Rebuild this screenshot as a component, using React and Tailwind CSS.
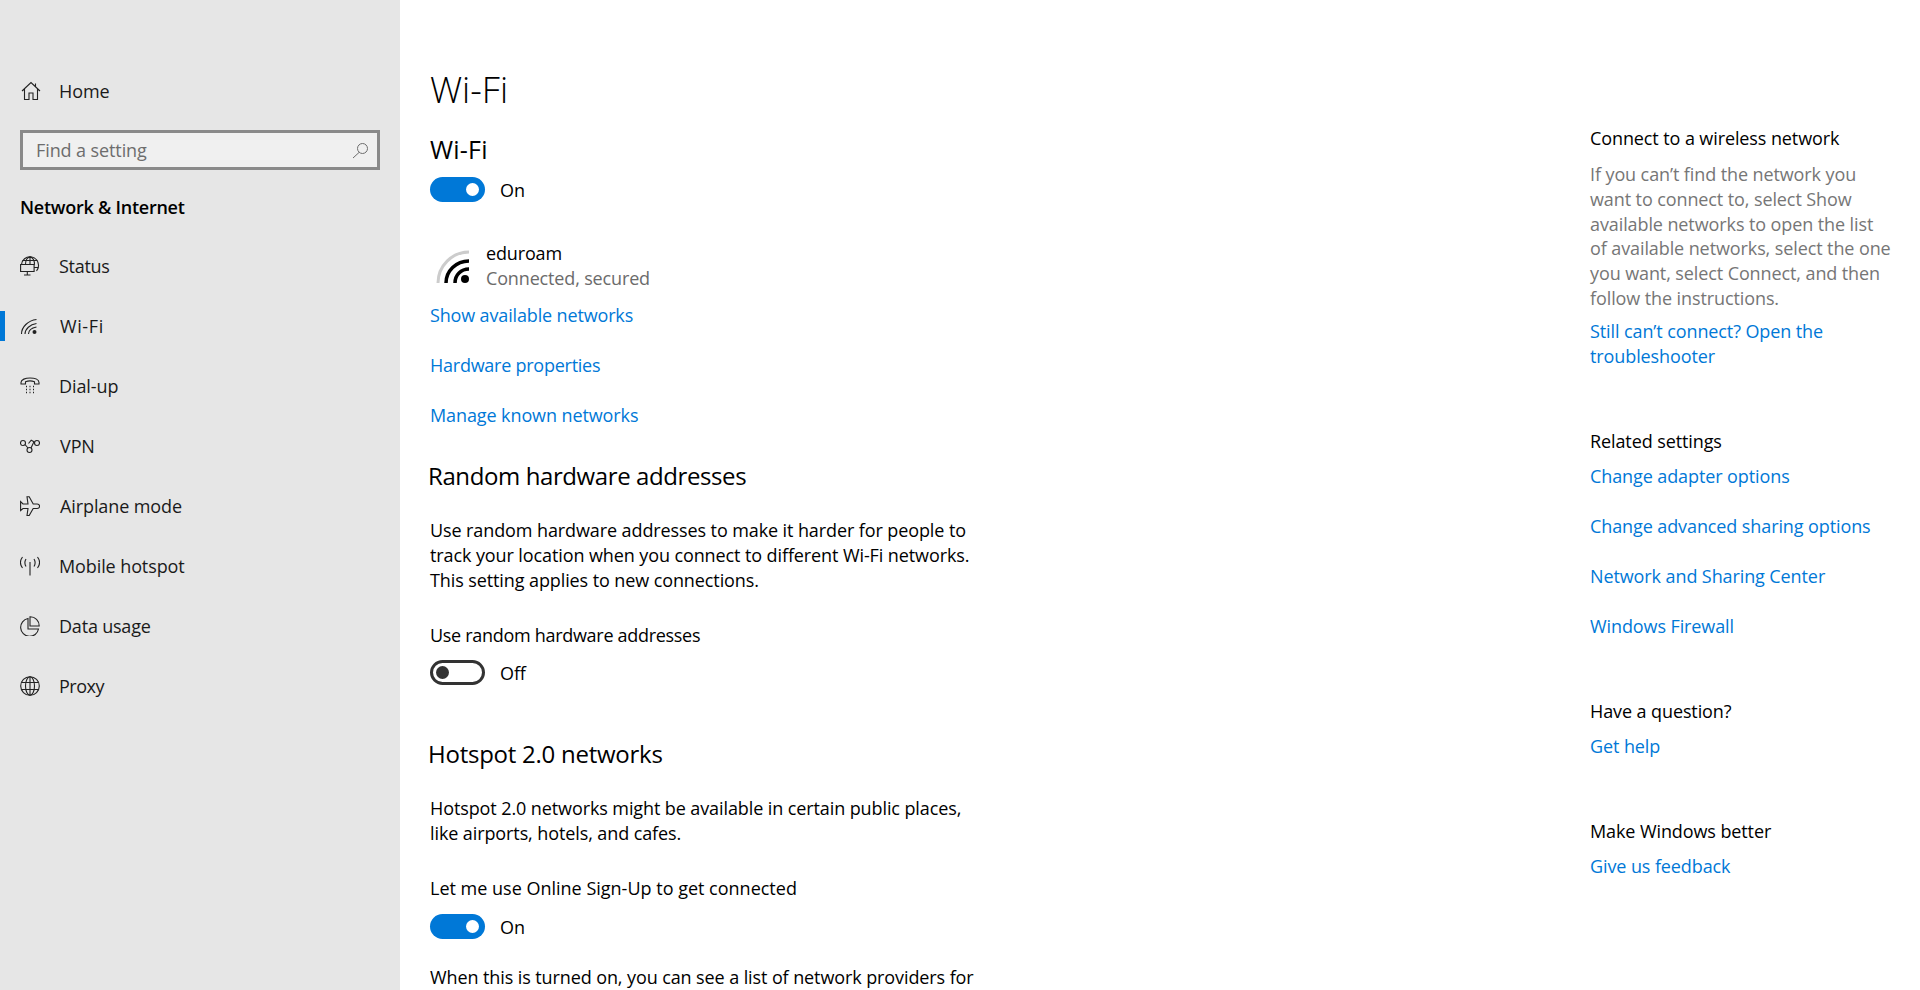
import React from "react";

const font = { fontFamily: '"Open Sans", "Noto Sans", sans-serif' };

function Icon({ children }) {
  return (
    <svg width="20" height="20" viewBox="0 0 20 20" fill="none" stroke="#222222" strokeWidth="1.1" className="shrink-0">
      {children}
    </svg>
  );
}

const HomeIcon = () => (
  <Icon>
    <path d="M1 10 10 1.500 19 10M3.500 8v10.500h4.500v-6.500h4v6.500h4.500V8M14.500 2.500v3" />
  </Icon>
);
const StatusIcon = () => (
  <Icon>
    <path d="M1.500 8.500a8.500 8.500 0 1 1 17 1.500 8 8 0 0 1-2 5" />
    <path d="M5.500 8.500C5.500 4.500 7.500 1.500 10 .8c2.500.7 4.500 4 4.500 8M10 1v7.500M2.500 4.500h15M14 11.500h4.500" />
    <path d="M.6 8.500h13.500v7H.6zM7.300 15.500v3.500M4 19h6.500" />
  </Icon>
);
const WifiIcon = () => (
  <Icon>
    <path d="M1.500 18C1.500 11 8 4.500 16.500 3.500" />
    <path d="M5 18c0-5 5-9.500 11.500-10.500" />
    <path d="M8.500 18c0-3.500 3-6 8-7" />
    <circle cx="14.500" cy="16" r="2" fill="#222222" stroke="none" />
  </Icon>
);
const DialIcon = () => (
  <Icon>
    <path d="M1 6.500C1 .5 19 .5 19 6.500v1.500h-4.500V5.800c-2.500-1-6.500-1-9 0V8H1z" />
    <path d="M6 10.500h1M9.500 10.500h1M13 10.500h1M6 13.500h1M9.500 13.500h1M13 13.500h1M6 16.500h1M9.500 16.500h1M13 16.500h1" strokeWidth="1.300" />
  </Icon>
);
const VpnIcon = () => (
  <Icon>
    <circle cx="3" cy="7" r="2.500" />
    <circle cx="17" cy="7" r="2.500" />
    <circle cx="9.500" cy="14" r="2.500" />
    <path d="M5 8.500l3 3.500M11 12 14.200 5.200M14.500 6 11.200 4.200 8.500 7.500" />
  </Icon>
);
const PlaneIcon = () => (
  <Icon>
    <path d="M.6 5.500v9l2.400-2h5L7 19.500h2.200l4-7h4c3.200 0 3.200-4.500 0-4.500h-4l-4-7.200H7l1 7.200H3z" />
  </Icon>
);
const HotspotIcon = () => (
  <Icon>
    <path d="M10 6v13.500M2.500 1C-.5 5-.5 8 2.500 12M6 3c-1.500 2.500-1.500 5 0 7.500M17.500 1c3 4 3 7 0 11M14 3c1.500 2.500 1.500 5 0 7.500" />
  </Icon>
);
const DataIcon = () => (
  <Icon>
    <path d="M8 2.500a9 9 0 1 0 10.500 10.500H8z" />
    <path d="M10 .8a9 9 0 0 1 9.200 9.200H10z" />
  </Icon>
);
const GlobeIcon = () => (
  <Icon>
    <circle cx="10" cy="10" r="9.300" />
    <ellipse cx="10" cy="10" rx="4.500" ry="9.300" />
    <path d="M10 .8v18.400M1.500 6.500h17M1.500 13.500h17" />
  </Icon>
);

const navItems = [
  { label: "Status", icon: StatusIcon, text: "tracking-[-0.3px]" },
  { label: "Wi-Fi", icon: WifiIcon, active: true, gap: "gap-[20px]", text: "tracking-[0.6px]" },
  { label: "Dial-up", icon: DialIcon },
  { label: "VPN", icon: VpnIcon, gap: "gap-[20px]" },
  { label: "Airplane mode", icon: PlaneIcon, gap: "gap-[20px]" },
  { label: "Mobile hotspot", icon: HotspotIcon },
  { label: "Data usage", icon: DataIcon, text: "tracking-[-0.2px]" },
  { label: "Proxy", icon: GlobeIcon, text: "tracking-[-0.5px]" },
];

function NavRow({ item }) {
  const Ico = item.icon;
  return (
    <div className={"relative flex h-[60px] items-center pl-5 text-[#1a1a1a] " + (item.gap || "gap-[19px]")}>
      {item.active && <div className="absolute left-0 top-[15px] h-[30px] w-[5px] bg-[#0078d7]" />}
      <Ico />
      <span className={item.text}>{item.label}</span>
    </div>
  );
}

function Toggle({ on }) {
  return (
    <div className="flex h-[25px] items-center gap-[15px]">
      {on ? (
        <div className="flex h-[25px] w-[55px] items-center justify-end rounded-full bg-[#0078d7] pr-[6px]">
          <div className="h-[13px] w-[13px] rounded-full bg-white" />
        </div>
      ) : (
        <div className="flex h-[25px] w-[55px] items-center rounded-full border-[3px] border-[#333333] pl-[3px]">
          <div className="h-[13px] w-[13px] rounded-full bg-[#333333]" />
        </div>
      )}
      <span className="pt-[2px]">{on ? "On" : "Off"}</span>
    </div>
  );
}

function A({ children, className = "" }) {
  return <div className={"text-[#0078d7] " + className}>{children}</div>;
}

function Sidebar() {
  return (
    <aside className="w-[400px] shrink-0 bg-[#e6e6e6] pt-[61px]">
      <div className="flex h-[60px] items-center gap-[18px] pl-[21px] text-[#1a1a1a]">
        <HomeIcon />
        <span>Home</span>
      </div>
      <div className="mx-5 mt-[9px] flex h-10 items-center justify-between border-[3px] border-[#8a8a8a] bg-[#f0f0f0] pl-[13px] pr-2 text-[#6d6d6d]">
        <span>Find a setting</span>
        <svg width="17" height="17" viewBox="0 0 17 17" fill="none" stroke="#6d6d6d" strokeWidth="1">
          <circle cx="10.500" cy="6.500" r="5" />
          <path d="M7 10.500 1 16" />
        </svg>
      </div>
      <div className="mt-[25px] pl-5 font-semibold tracking-[-0.25px] text-black">Network &amp; Internet</div>
      <div className="mt-[16px]">
        {navItems.map((item) => (
          <NavRow key={item.label} item={item} />
        ))}
      </div>
    </aside>
  );
}

function Main() {
  return (
    <main className="flex-1 pl-[30px] pt-[68px] text-black">
      <h1 className="text-[36px] leading-[44px] font-light tracking-normal">Wi-Fi</h1>
      <h2 className="mt-[21px] text-[25px] leading-[32px] font-normal tracking-[0.2px]">Wi-Fi</h2>
      <div className="mt-[12px]">
        <Toggle on />
      </div>
      <div className="mt-[39px] flex items-start">
        <svg width="56" height="50" viewBox="0 0 56 50" fill="none" className="shrink-0" strokeWidth="3">
          <path d="M8 42c0-17 14-31 31-31" stroke="#cccccc" />
          <path d="M16 42c0-12 10-22 23-22" stroke="#000000" strokeWidth="3.500" />
          <path d="M25 42c0-8 6-14 14-14" stroke="#000000" strokeWidth="3.500" />
          <circle cx="35" cy="38" r="4" fill="#000000" />
        </svg>
        <div className="tracking-[-0.15px]">
          <div className="leading-[25px]">eduroam</div>
          <div className="leading-[25px] text-[#6b6b6b]">Connected, secured</div>
        </div>
      </div>
      <A className="mt-[12px] tracking-[-0.15px]">Show available networks</A>
      <A className="mt-[25px] tracking-[-0.25px]">Hardware properties</A>
      <A className="mt-[25px]">Manage known networks</A>
      <h3 className="-ml-[2px] mt-[32px] text-[24px] leading-[32px] font-normal tracking-[-0.4px]">Random hardware addresses</h3>
      <p className="mt-[26px]">
        Use random hardware addresses to make it harder for people to
        <br />
        track your location when you connect to different Wi-Fi networks.
        <br />
        This setting applies to new connections.
      </p>
      <div className="mt-[30px] tracking-[-0.3px]">Use random hardware addresses</div>
      <div className="mt-[12px]">
        <Toggle />
      </div>
      <h3 className="-ml-[2px] mt-[53px] text-[24px] leading-[32px] font-normal tracking-[-0.25px]">Hotspot 2.0 networks</h3>
      <p className="mt-[26px]">
        Hotspot 2.0 networks might be available in certain public places,
        <br />
        like airports, hotels, and cafes.
      </p>
      <div className="mt-[30px] tracking-normal">Let me use Online Sign-Up to get connected</div>
      <div className="mt-[13px]">
        <Toggle on />
      </div>
      <p className="mt-[26px]">When this is turned on, you can see a list of network providers for</p>
    </main>
  );
}

function Aside() {
  return (
    <aside className="w-[330px] shrink-0 pt-[126px] text-black">
      <div>Connect to a wireless network</div>
      <p className="mt-[11px] leading-[24.8px] text-[#767676]">
        If you can’t find the network you
        <br />
        want to connect to, select Show
        <br />
        available networks to open the list
        <br />
        of available networks, select the one
        <br />
        you want, select Connect, and then
        <br />
        follow the instructions.
      </p>
      <A className="mt-[8px]">
        Still can’t connect? Open the
        <br />
        troubleshooter
      </A>
      <div className="mt-[60px]">Related settings</div>
      <A className="mt-[10px]">Change adapter options</A>
      <A className="mt-[25px]">Change advanced sharing options</A>
      <A className="mt-[25px]">Network and Sharing Center</A>
      <A className="mt-[25px]">Windows Firewall</A>
      <div className="mt-[60px]">Have a question?</div>
      <A className="mt-[10px]">Get help</A>
      <div className="mt-[60px]">Make Windows better</div>
      <A className="mt-[10px]">Give us feedback</A>
    </aside>
  );
}

export default function App() {
  return (
    <div className="flex h-[990px] overflow-hidden bg-white text-[18px] leading-[25px] tracking-[-0.1px]" style={font}>
      <Sidebar />
      <Main />
      <Aside />
    </div>
  );
}
